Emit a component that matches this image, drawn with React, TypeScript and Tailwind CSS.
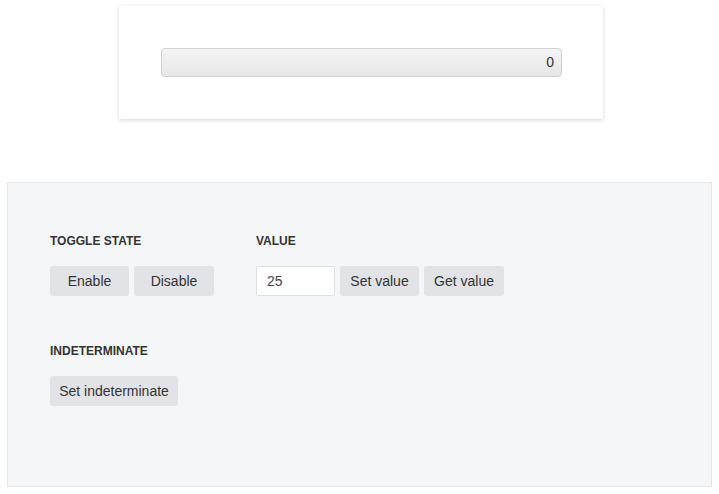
export default function App() {
  const btn =
    "h-[30px] whitespace-nowrap rounded-[3px] bg-[#e2e3e6] text-[14px] text-[#333]";

  return (
    <div
      className="min-h-[494px] bg-white pt-[6px]"
      style={{ fontFamily: '"Liberation Sans", Arial, sans-serif' }}
    >
      {/* Progress card */}
      <div className="ml-[119px] w-[484px] bg-white py-[42px] pl-[42px] pr-[41px] shadow-[0_1px_4px_rgba(0,0,0,0.18)]">
        <div className="flex h-[29px] items-center justify-end rounded-[4px] border border-[#cfcfcf] bg-gradient-to-b from-[#f5f5f5] to-[#e6e6e6] pr-[7px] text-[14px] text-[#333]">
          0
        </div>
      </div>

      {/* Controls panel */}
      <div className="mx-[7px] mt-[63px] h-[305px] border border-[#e4e5e8] bg-[#f5f6f8] px-[42px] pt-[51px]">
        <div className="flex gap-[42px]">
          <div>
            <div className="text-[12px] font-bold leading-[14px] text-[#333]">
              TOGGLE STATE
            </div>
            <div className="mt-[18px] flex gap-[5px]">
              <button className={`${btn} w-[79px]`}>Enable</button>
              <button className={`${btn} w-[80px]`}>Disable</button>
            </div>
          </div>
          <div>
            <div className="text-[12px] font-bold leading-[14px] text-[#333]">
              VALUE
            </div>
            <div className="mt-[18px] flex gap-[5px]">
              <input
                defaultValue="25"
                className="h-[30px] w-[79px] rounded-[2px] border border-[#dedfe2] bg-white px-[10px] text-[14px] text-[#444] outline-none"
              />
              <button className={`${btn} w-[79px]`}>Set value</button>
              <button className={`${btn} w-[80px]`}>Get value</button>
            </div>
          </div>
        </div>

        <div className="mt-[48px]">
          <div className="text-[12px] font-bold leading-[14px] text-[#333]">
            INDETERMINATE
          </div>
          <div className="mt-[18px] flex">
            <button className={`${btn} w-[128px]`}>Set indeterminate</button>
          </div>
        </div>
      </div>
    </div>
  );
}
